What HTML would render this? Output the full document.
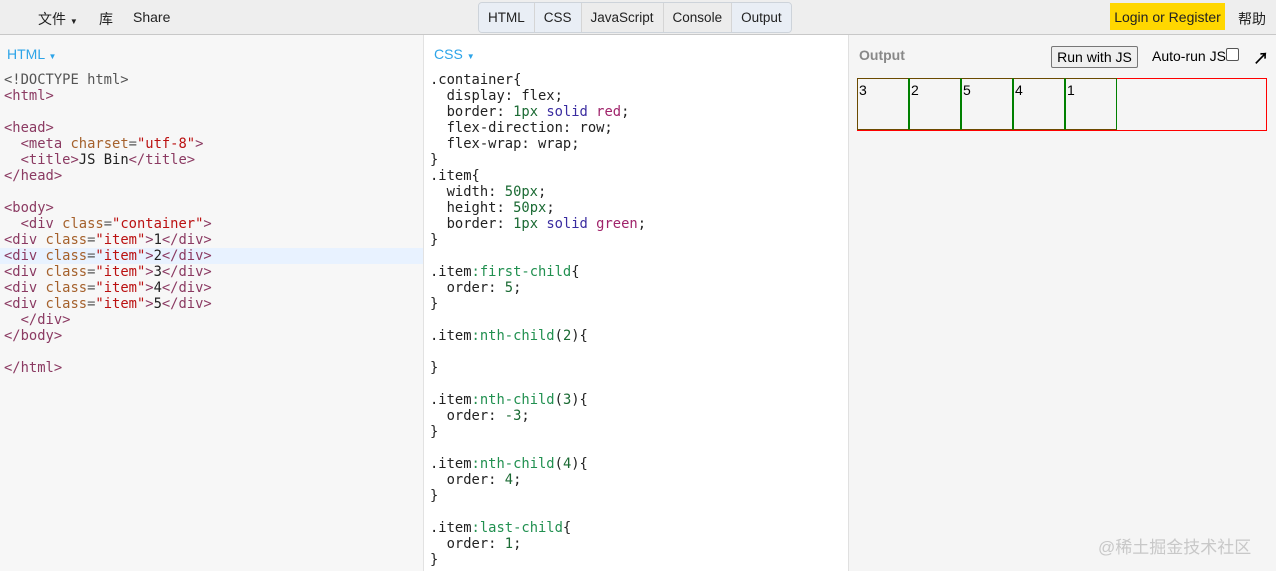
<!DOCTYPE html>
<html><head><meta charset="utf-8"><style>
body{margin:0;width:1276px;height:571px;overflow:hidden;font-family:"Liberation Sans","Noto Sans CJK SC",sans-serif;background:#fff;position:relative}
.top{position:absolute;left:0;top:0;width:1276px;height:34px;background:#eeeeee;border-bottom:1px solid #c8c8c8;font-size:14px;color:#222}
.top span{position:absolute;top:9px}
.tabs{position:absolute;left:478px;top:2px;height:29px;border:1px solid #cdd3da;border-radius:4px;display:flex;overflow:hidden}
.tabs div{padding:0 9px;line-height:29px;font-size:13.5px;border-left:1px solid #d5d5d5;background:#e9eef5}
.tabs div:first-child{border-left:0}
.tabs div.off{background:#ececec}
.login{position:absolute;left:1110px;top:3px;width:115px;height:27px;background:#ffd700;font-size:14px;line-height:28px;text-align:center;color:#222}
.p{position:absolute;top:35px;height:536px}
pre{margin:0;font-family:"DejaVu Sans Mono",monospace;font-size:13.8px;line-height:16px;position:absolute;top:72px;color:#222}
.lab{position:absolute;top:46px;font-size:14px;color:#2da4e8}
.t{color:#8b3a62}.a{color:#a5612c}.s{color:#b11}.n{color:#1a6a33}.k{color:#3a2ca0}.r{color:#a0246b}.g{color:#219050}
.it{width:50px;height:50px;border:1px solid green;margin-top:-1px;font-size:14px;line-height:22px;text-indent:1px;box-sizing:content-box;flex:none}
</style></head><body>
<div class="top">
<span style="left:38px">文件 <small style="font-size:8px">▼</small></span><span style="left:99px">库</span><span style="left:133px">Share</span>
<div class="tabs"><div>HTML</div><div>CSS</div><div class="off">JavaScript</div><div class="off">Console</div><div>Output</div></div>
<div class="login">Login or Register</div><span style="left:1238px">帮助</span>
</div>
<div class="p" style="left:0;width:423px;background:#f7f7f7;border-right:1px solid #e2e2e2"></div>
<div style="position:absolute;left:0;top:248px;width:423px;height:16px;background:#e8f2ff"></div>
<div class="lab" style="left:7px">HTML <small style="font-size:8px">▼</small></div>
<pre style="left:4px;color:#555"><span style="color:#555">&lt;!DOCTYPE html&gt;</span>
<span class="t">&lt;html&gt;</span>

<span class="t">&lt;head&gt;</span>
  <span class="t">&lt;meta</span> <span class="a">charset</span>=<span class="s">"utf-8"</span><span class="t">&gt;</span>
  <span class="t">&lt;title&gt;</span><span style="color:#222">JS Bin</span><span class="t">&lt;/title&gt;</span>
<span class="t">&lt;/head&gt;</span>

<span class="t">&lt;body&gt;</span>
  <span class="t">&lt;div</span> <span class="a">class</span>=<span class="s">"container"</span><span class="t">&gt;</span>
<span class="t">&lt;div</span> <span class="a">class</span>=<span class="s">"item"</span><span class="t">&gt;</span><span style="color:#222">1</span><span class="t">&lt;/div&gt;</span>
<span class="t">&lt;div</span> <span class="a">class</span>=<span class="s">"item"</span><span class="t">&gt;</span><span style="color:#222">2</span><span class="t">&lt;/div&gt;</span>
<span class="t">&lt;div</span> <span class="a">class</span>=<span class="s">"item"</span><span class="t">&gt;</span><span style="color:#222">3</span><span class="t">&lt;/div&gt;</span>
<span class="t">&lt;div</span> <span class="a">class</span>=<span class="s">"item"</span><span class="t">&gt;</span><span style="color:#222">4</span><span class="t">&lt;/div&gt;</span>
<span class="t">&lt;div</span> <span class="a">class</span>=<span class="s">"item"</span><span class="t">&gt;</span><span style="color:#222">5</span><span class="t">&lt;/div&gt;</span>
  <span class="t">&lt;/div&gt;</span>
<span class="t">&lt;/body&gt;</span>

<span class="t">&lt;/html&gt;</span></pre>
<div class="lab" style="left:434px">CSS <small style="font-size:8px">▼</small></div>
<pre style="left:430px">.container{
  display: flex;
  border: <span class="n">1px</span> <span class="k">solid</span> <span class="r">red</span>;
  flex-direction: row;
  flex-wrap: wrap;
}
.item{
  width: <span class="n">50px</span>;
  height: <span class="n">50px</span>;
  border: <span class="n">1px</span> <span class="k">solid</span> <span class="r">green</span>;
}

.item<span class="g">:first-child</span>{
  order: <span class="n">5</span>;
}

.item<span class="g">:nth-child</span>(<span class="n">2</span>){

}

.item<span class="g">:nth-child</span>(<span class="n">3</span>){
  order: <span class="n">-3</span>;
}

.item<span class="g">:nth-child</span>(<span class="n">4</span>){
  order: <span class="n">4</span>;
}

.item<span class="g">:last-child</span>{
  order: <span class="n">1</span>;
}</pre>
<div class="p" style="left:848px;width:428px;background:#f5f5f5;border-left:1px solid #e0e0e0"></div>
<div style="position:absolute;left:859px;top:47px;font-size:14px;color:#888;font-weight:bold">Output</div>
<div style="position:absolute;left:1051px;top:46px;width:85px;height:20px;border:1px solid #777;border-radius:2px;background:#efefef;font-size:14px;line-height:20px;text-align:center">Run with JS</div>
<div style="position:absolute;left:1152px;top:48px;font-size:14px">Auto-run JS</div>
<div style="position:absolute;left:1226px;top:48px;width:11px;height:11px;border:1px solid #555;border-radius:2px;background:#fff"></div>
<div style="position:absolute;left:1253px;top:45px;font-size:16px;font-weight:bold">↗</div>
<div style="position:absolute;left:857px;top:78px;width:408px;height:51px;border:1px solid red;display:flex">
<div class="it" style="margin-left:-1px;border-color:#6b4a00 green #6b4a00 #6b4a00">3</div>
<div class="it" style="border-color:#6b4a00 green #6b4a00 green">2</div>
<div class="it" style="border-color:#6b4a00 green #6b4a00 green">5</div>
<div class="it" style="border-color:#6b4a00 green #6b4a00 green">4</div>
<div class="it" style="border-color:#6b4a00 green #6b4a00 green">1</div>
</div>
<div style="position:absolute;left:1098px;top:533px;font-size:17px;color:#c8c8c8">@稀土掘金技术社区</div>
</body></html>
